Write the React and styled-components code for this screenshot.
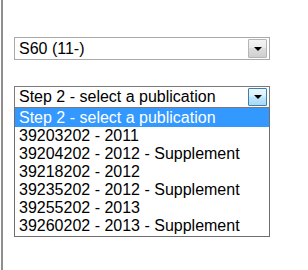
import React from "react";
import styled, { createGlobalStyle } from "styled-components";

const Global = createGlobalStyle`
  html, body { margin: 0; padding: 0; background: #ffffff; }
  body { font-family: "Liberation Sans", Arial, sans-serif; }
`;

const Page = styled.div`
  box-sizing: border-box;
  height: 270px;
  width: 308px;
  margin-left: 1px;
  border-left: 2px solid #8e8e8e;
  padding-top: 37px;
  padding-left: 11px;
  display: flex;
  flex-direction: column;
  gap: 26px;
`;

const Combo = styled.div`
  width: 256px;
  display: flex;
  flex-direction: column;
`;

const Field = styled.div`
  box-sizing: border-box;
  height: ${(p) => (p.$open ? "22px" : "23px")};
  border: 1px solid ${(p) => (p.$open ? "#7a7a7a" : "#a9a9a9")};
  background: #fff;
  display: flex;
  align-items: center;
  padding: 1px;
`;

const Value = styled.span`
  flex: 1;
  font-size: 16px;
  line-height: 18px;
  color: #000;
  padding-left: 3px;
  white-space: nowrap;
  overflow: hidden;
`;

const ArrowBtn = styled.div`
  box-sizing: border-box;
  width: 19px;
  height: 100%;
  margin-right: 1px;
  border: 1px solid ${(p) => (p.$active ? "#3c7fb1" : "#b5b5b5")};
  border-radius: 1px;
  background: ${(p) =>
    p.$active
      ? "linear-gradient(#eaf6fd 0%, #d9f0fc 45%, #bee6fd 50%, #a7d9f5 100%)"
      : "linear-gradient(#f4f4f4 0%, #ebebeb 45%, #dddddd 50%, #cfcfcf 100%)"};
  display: flex;
  align-items: center;
  justify-content: center;
`;

const Tri = styled.span`
  width: 0;
  height: 0;
  border-left: 4px solid transparent;
  border-right: 4px solid transparent;
  border-top: 4px solid #000;
`;

const List = styled.ul`
  box-sizing: border-box;
  list-style: none;
  margin: 0;
  padding: 0 0 1px 0;
  border: 1px solid #6e6e6e;
  border-top: none;
  background: #fff;
`;

const Option = styled.li`
  height: ${(p) => (p.$selected ? "19px" : "18px")};
  line-height: ${(p) => (p.$selected ? "19px" : "18px")};
  font-size: 16px;
  padding-left: 4px;
  white-space: nowrap;
  color: ${(p) => (p.$selected ? "#ffffff" : "#000000")};
  background: ${(p) => (p.$selected ? "#3399ff" : "transparent")};
`;

const options = [
  "Step 2 - select a publication",
  "39203202 - 2011",
  "39204202 - 2012 - Supplement",
  "39218202 - 2012",
  "39235202 - 2012 - Supplement",
  "39255202 - 2013",
  "39260202 - 2013 - Supplement",
];

function Arrow({ active }) {
  return (
    <ArrowBtn $active={active}>
      <Tri />
    </ArrowBtn>
  );
}

export default function App() {
  return (
    <>
      <Global />
      <Page>
        <Combo>
          <Field>
            <Value>S60 (11-)</Value>
            <Arrow />
          </Field>
        </Combo>
        <Combo>
          <Field $open>
            <Value>Step 2 - select a publication</Value>
            <Arrow active />
          </Field>
          <List>
            {options.map((o, i) => (
              <Option key={o} $selected={i === 0}>
                {o}
              </Option>
            ))}
          </List>
        </Combo>
      </Page>
    </>
  );
}
